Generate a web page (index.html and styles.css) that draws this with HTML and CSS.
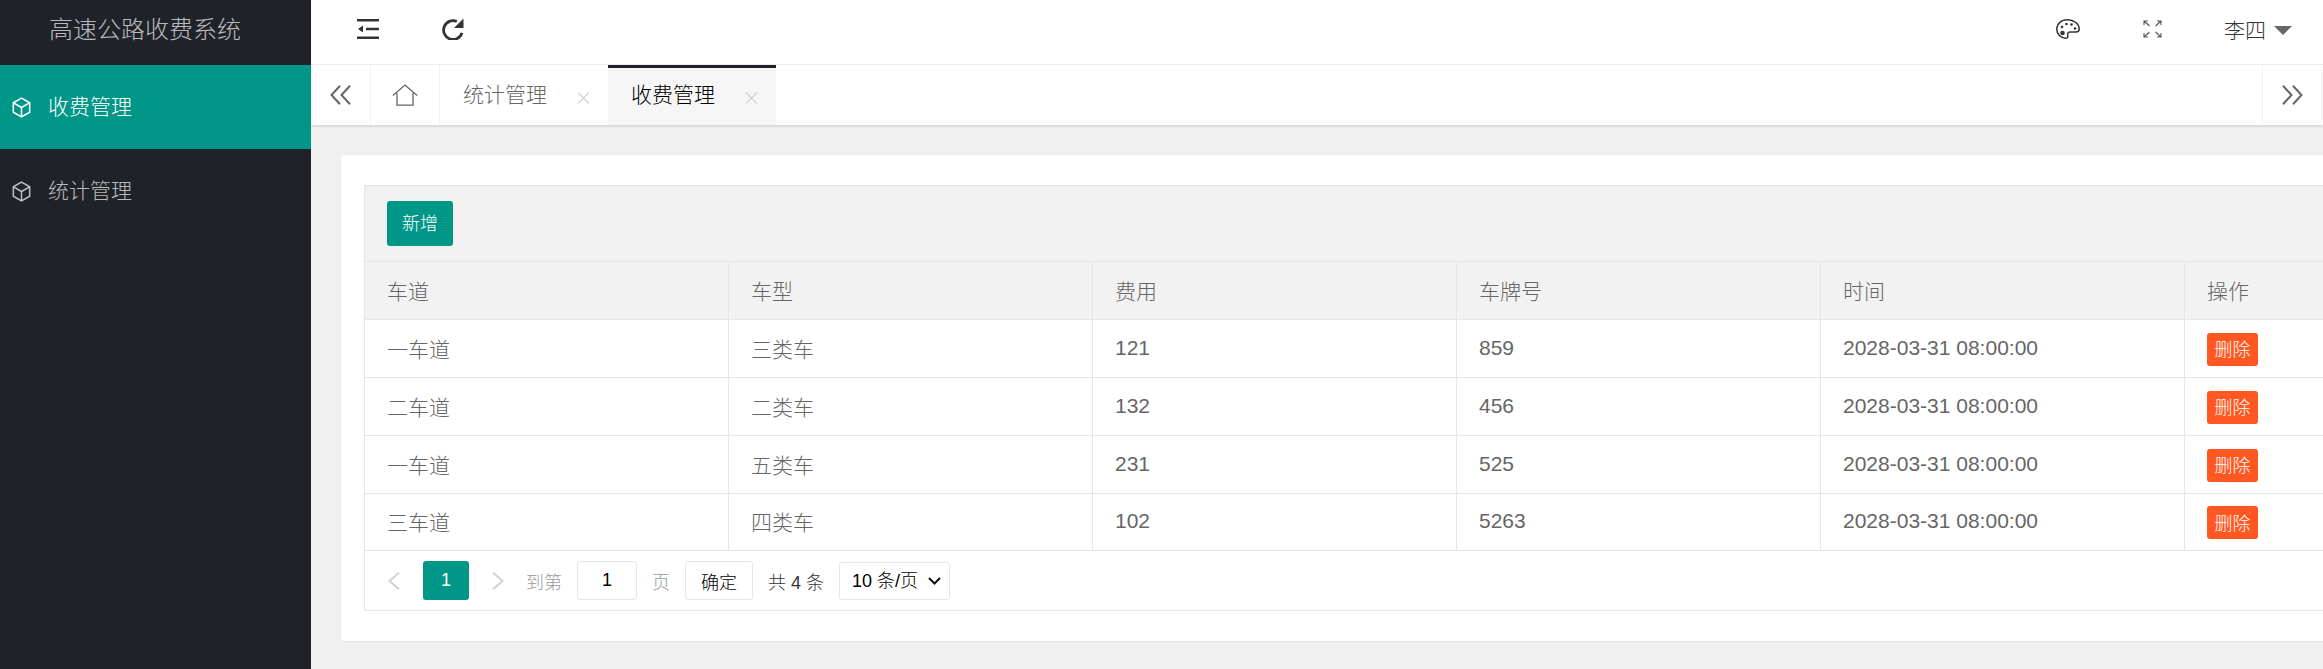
FILE: index.html
```html
<!DOCTYPE html>
<html lang="zh-CN">
<head>
<meta charset="utf-8">
<title>高速公路收费系统</title>
<link rel="stylesheet" href="styles.css">
</head>
<body>
<div class="app">
  <aside class="side">
    <div class="logo">高速公路收费系统</div>
    <nav class="menu">
      <a class="menu-item active">
        <svg class="cube" viewBox="0 0 20 22"><path d="M10 1.200 18.600 6v10L10 20.800 1.400 16V6zM1.600 6.200 10 11l8.400-4.800M10 11v9.600"/></svg>
        <span>收费管理</span>
      </a>
      <a class="menu-item">
        <svg class="cube" viewBox="0 0 20 22"><path d="M10 1.200 18.600 6v10L10 20.800 1.400 16V6zM1.600 6.200 10 11l8.400-4.800M10 11v9.600"/></svg>
        <span>统计管理</span>
      </a>
    </nav>
  </aside>
  <main class="main">
    <header class="top">
      <div class="top-left">
        <svg class="ic-shrink" viewBox="0 0 22 20"><path d="M0 0h22v2.600H0zM0 17.400h22V20H0zM9 8.700h13v2.600H9zM1 10l5-3.600v7.200z"/></svg>
        <svg class="ic-refresh" viewBox="0 0 22 22"><path class="arc" d="M20 14.800A9.400 9.400 0 1 1 14.800 3.500"/><path class="head" d="M21.500.5v9.500h-9.500z"/></svg>
      </div>
      <div class="top-right">
        <svg class="ic-palette" viewBox="0 0 24 20"><path class="line" d="M11.500.8C5.200.8.800 4.800.8 10.200c0 5 4 9 8.700 9 2.300 0 2.700-1.500 2.200-3-.6-1.800.5-3.200 2.500-3.200h5.800c2.200 0 3.200-1.100 3.200-3C23.200 5 18.200.8 11.500.8z"/><circle cx="6.500" cy="14" r="2.300"/><circle cx="6" cy="8" r="1.300"/><circle cx="10.500" cy="5" r="1.300"/><circle cx="15.500" cy="5.500" r="1.300"/><circle cx="19" cy="9.500" r="1.300"/></svg>
        <svg class="ic-full" viewBox="0 0 19 18"><path d="M1 5V1h4M1 1l5.500 5M14 1h4v4M18 1l-5.500 5M1 13v4h4M1 17l5.500-5M18 13v4h-4M18 17l-5.500-5"/></svg>
        <div class="user"><span>李四</span><i class="caret"></i></div>
      </div>
    </header>
    <div class="tabs">
      <div class="tab-btn tab-prev">
        <svg class="ic-dbl" viewBox="0 0 21 20"><path d="M10 .8 1.500 10l8.500 9.200M20 .8 11.500 10l8.500 9.200"/></svg>
      </div>
      <div class="tab-home">
        <svg class="ic-home" viewBox="0 0 26 22"><path d="M.8 11.500 13 1l12.200 10.500M5 9v12.200h16V9"/></svg>
      </div>
      <div class="tab"><span>统计管理</span><svg class="x" viewBox="0 0 13 12"><path d="M1 .5l11 11M12 .5l-11 11"/></svg></div>
      <div class="tab current"><span>收费管理</span><svg class="x" viewBox="0 0 13 12"><path d="M1 .5l11 11M12 .5l-11 11"/></svg></div>
      <div class="tab-space"></div>
      <div class="tab-btn tab-next">
        <svg class="ic-dbl" viewBox="0 0 21 20"><path d="M1 .8 9.500 10 1 19.200M11 .8 19.500 10 11 19.200"/></svg>
      </div>
    </div>
    <section class="content">
      <div class="card">
        <div class="toolbar"><button class="btn-add">新增</button></div>
        <table class="grid">
          <thead>
            <tr><th>车道</th><th>车型</th><th>费用</th><th>车牌号</th><th>时间</th><th>操作</th></tr>
          </thead>
          <tbody>
            <tr><td>一车道</td><td>三类车</td><td>121</td><td>859</td><td>2028-03-31 08:00:00</td><td><button class="btn-del">删除</button></td></tr>
            <tr><td>二车道</td><td>二类车</td><td>132</td><td>456</td><td>2028-03-31 08:00:00</td><td><button class="btn-del">删除</button></td></tr>
            <tr><td>一车道</td><td>五类车</td><td>231</td><td>525</td><td>2028-03-31 08:00:00</td><td><button class="btn-del">删除</button></td></tr>
            <tr class="last"><td>三车道</td><td>四类车</td><td>102</td><td>5263</td><td>2028-03-31 08:00:00</td><td><button class="btn-del">删除</button></td></tr>
          </tbody>
        </table>
        <div class="pager">
          <svg class="ic-page prev" viewBox="0 0 12 18"><path d="M11 .7 1.500 9l9.500 8.300"/></svg>
          <span class="page-cur">1</span>
          <svg class="ic-page next" viewBox="0 0 12 18"><path d="M1 .7 10.500 9 1 17.300"/></svg>
          <span class="pg-label first">到第</span>
          <input class="pg-input" value="1">
          <span class="pg-label">页</span>
          <button class="pg-ok">确定</button>
          <span class="pg-total">共 4 条</span>
          <select class="pg-size"><option>10 条/页</option></select>
        </div>
      </div>
    </section>
  </main>
</div>
</body>
</html>
```
FILE: styles.css
```css
* { box-sizing: border-box; }
html, body { margin: 0; height: 669px; overflow: hidden; }
body {
  font-family: "Liberation Sans", "Noto Sans CJK SC", sans-serif;
  font-size: 21px;
  font-weight: 300;
  color: #666;
  background: #f0f0f0;
}
.app { display: flex; height: 669px; }

.side { flex: 0 0 311px; background: #20222a; }
.logo {
  height: 65px;
  padding: 0 0 10px 49px;
  display: flex;
  align-items: center;
  font-size: 24px;
  color: rgba(255,255,255,.7);
}
.menu-item {
  display: flex;
  align-items: center;
  height: 84px;
  padding-left: 12px;
  color: rgba(255,255,255,.7);
}
.menu-item span { margin-left: 17px; padding-bottom: 4px; }
.menu-item.active { background: #009688; color: #fff; }
.cube { width: 19px; height: 21px; fill: none; stroke: currentColor; stroke-width: 1.6; }

.main { flex: 1; min-width: 0; display: flex; flex-direction: column; overflow: hidden; }

.top {
  height: 65px;
  flex: none;
  background: #fff;
  border-bottom: 1px solid #f2f2f2;
  display: flex;
  justify-content: space-between;
  padding-bottom: 6px;
  align-items: center;
}
.top-left { display: flex; align-items: center; padding-left: 46px; }
.ic-shrink { width: 22px; height: 20px; fill: #333; }
.ic-refresh { width: 22px; height: 22px; margin-left: 63px; }
.ic-refresh .arc { fill: none; stroke: #333; stroke-width: 2.8; }
.ic-refresh .head { fill: #333; }
.top-right { display: flex; align-items: center; padding-right: 31px; }
.ic-palette { width: 24px; height: 20px; fill: #333; }
.ic-palette .line { fill: none; stroke: #333; stroke-width: 1.500; }
.ic-full { width: 19px; height: 18px; margin-left: 63px; fill: none; stroke: #555; stroke-width: 1.1; }
.user { display: flex; align-items: center; margin-left: 62px; color: #333; }
.caret {
  margin-left: 8px;
  margin-top: 3px;
  border-style: solid;
  border-width: 9px 9px 0;
  border-color: #666 transparent transparent;
}

.tabs {
  height: 60px;
  flex: none;
  display: flex;
  background: #fff;
  box-shadow: 0 1px 3px rgba(0,0,0,.15);
  position: relative;
}
.tab-btn { flex: 0 0 60px; display: flex; align-items: center; justify-content: center; }
.tab-prev { border-right: 1px solid #f2f2f2; }
.tab-next { border-left: 1px solid #f2f2f2; border-right: 1px solid #f2f2f2; margin-right: 1px; }
.ic-dbl { width: 21px; height: 20px; fill: none; stroke: #666; stroke-width: 2; }
.tab-home {
  flex: 0 0 69px;
  border-right: 1px solid #f2f2f2;
  display: flex;
  align-items: center;
  justify-content: center;
}
.ic-home { width: 26px; height: 22px; fill: none; stroke: #666; stroke-width: 1.300; }
.tab {
  flex: 0 0 168px;
  display: flex;
  align-items: center;
  padding-left: 23px;
  position: relative;
}
.tab span { padding-bottom: 4px; }
.tab.current { background: #f6f6f6; color: #000; }
.tab.current::before {
  content: "";
  position: absolute;
  left: 0; right: 0; top: 0;
  height: 3px;
  background: #20222a;
}
.x { width: 13px; height: 12px; margin-left: 30px; margin-top: 5px; fill: none; stroke: #d2d2d2; stroke-width: 1.2; }
.tab-space { flex: 1; }

.content { flex: 1; padding: 30px 0 0 30px; }
.card {
  width: 2400px;
  height: 486px;
  background: #fff;
  border-radius: 3px;
  padding: 30px 23px;
  box-shadow: 0 1px 2px rgba(0,0,0,.05);
}
.toolbar {
  height: 76px;
  background: #f2f2f2;
  border: 1px solid #e6e6e6;
  border-bottom: 0;
  padding: 15px 22px;
}
.btn-add {
  height: 45px;
  width: 66px;
  border: 0;
  padding: 0 0 4px;
  border-radius: 3px;
  background: #009688;
  color: #fff;
  font: inherit;
  font-size: 18px;
}
.grid {
  border-collapse: collapse;
  table-layout: fixed;
  width: 2185px;
}
.grid th, .grid td {
  border: 1px solid #e6e6e6;
  padding: 0 22px 2px;
  height: 58px;
  text-align: left;
  font-weight: 300;
}
.grid th { background: #f2f2f2; }
.grid .last td { height: 57px; }
.btn-del {
  display: block;
  margin-top: 3px;
  width: 51px;
  height: 33px;
  border: 0;
  padding: 0 0 2px;
  border-radius: 3px;
  background: #ff5722;
  color: #fff;
  font: inherit;
  font-size: 18px;
}
.pager {
  width: 2185px;
  height: 60px;
  border: 1px solid #e6e6e6;
  border-top: 0;
  display: flex;
  align-items: center;
  padding: 0 0 0 23px;
  font-size: 18px;
}
.ic-page { width: 12px; height: 18px; fill: none; stroke: #d2d2d2; stroke-width: 2; }
.page-cur {
  width: 46px;
  height: 39px;
  margin-left: 23px;
  background: #009688;
  color: #fff;
  border-radius: 3px;
  display: flex;
  align-items: center;
  justify-content: center;
}
.ic-page.next { margin-left: 23px; }
.pg-label { color: #999; margin-left: 15px; }
.pg-label.first { margin-left: 22px; }
.pg-input {
  width: 60px;
  height: 39px;
  margin-left: 15px;
  border: 1px solid #e6e6e6;
  border-radius: 3px;
  text-align: center;
  font: inherit;
  color: #000;
  padding: 0;
}
.pg-ok {
  width: 68px;
  height: 39px;
  margin-left: 15px;
  background: #fff;
  border: 1px solid #e6e6e6;
  border-radius: 3px;
  font: inherit;
  color: #000;
  padding: 0;
}
.pg-total { margin-left: 15px; color: #333; }
.pg-size {
  appearance: none;
  width: 111px;
  height: 38px;
  margin-left: 15px;
  border: 1px solid #e6e6e6;
  border-radius: 3px;
  font: inherit;
  color: #000;
  padding: 0 0 0 12px;
  background: #fff url("data:image/svg+xml,%3Csvg xmlns='http://www.w3.org/2000/svg' viewBox='0 0 13 8'%3E%3Cpath d='M1 1l5.500 5.500L12 1' fill='none' stroke='%23111' stroke-width='2'/%3E%3C/svg%3E") no-repeat right 8px center / 13px 8px;
}
```
